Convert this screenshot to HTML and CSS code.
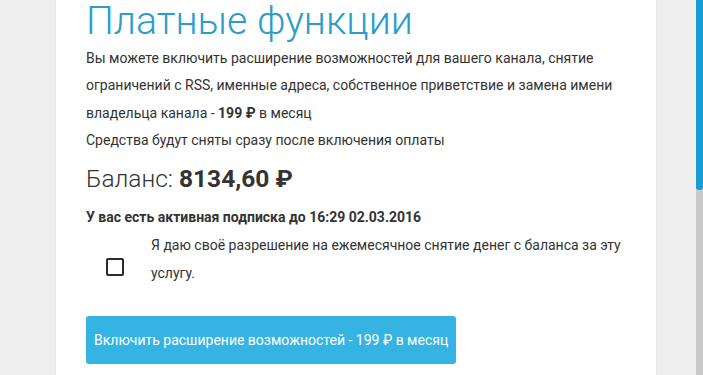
FILE: index.html
```html
<!DOCTYPE html>
<html lang="ru">
<head>
<meta charset="utf-8">
<title>Платные функции</title>
<link rel="stylesheet" href="styles.css">
</head>
<body>
<div class="page">
  <main class="card">
    <h1 class="title">Платные функции</h1>
    <p class="text first">Вы можете включить расширение возможностей для вашего канала, снятие ограничений с RSS, именные адреса, собственное приветствие и замена имени владельца канала - <b>199 ₽</b> в месяц</p>
    <p class="text">Средства будут сняты сразу после включения оплаты</p>
    <h2 class="balance">Баланс: <b>8134,60 ₽</b></h2>
    <p class="sub">У вас есть активная подписка до 16:29 02.03.2016</p>
    <label class="agree">
      <span class="check-col"><span class="checkbox"></span></span>
      <span class="agree-text">Я даю своё разрешение на ежемесячное снятие денег с баланса за эту услугу.</span>
    </label>
    <button class="btn" type="button">Включить расширение возможностей - 199 ₽ в месяц</button>
  </main>
</div>
<div class="scrollbar"><div class="thumb"></div></div>
</body>
</html>
```

FILE: styles.css
```css
html, body {
  margin: 0;
  padding: 0;
  height: 375px;
  overflow: hidden;
}
body {
  background: #eeeeee;
  font-family: Roboto, "Liberation Sans", sans-serif;
  color: #333333;
}
.page {
  padding-left: 56px;
  width: 600px;
}
.card {
  width: 600px;
  box-sizing: border-box;
  background: #ffffff;
  padding: 0 30px 20px 30px;
  min-height: 400px;
  box-shadow: 0 0 1px rgba(0,0,0,0.12);
}
.title {
  margin: 0;
  font-size: 39.3px;
  line-height: 42px;
  font-weight: 300;
  color: #2a9dcb;
}
.text {
  margin: 0;
  font-size: 14px;
  line-height: 27.5px;
}
.text.first {
  margin-top: 2.5px;
}
.text b { font-weight: 700; }
.balance {
  margin: 10px 0 0 0;
  font-size: 24.5px;
  line-height: 28px;
  font-weight: 300;
}
.balance b { font-weight: 700; }
.sub {
  margin: 11.6px 0 0 0;
  font-size: 14px;
  line-height: 27.5px;
  font-weight: 700;
}
.agree {
  display: flex;
  align-items: flex-start;
  margin-top: 0.8px;
  font-size: 14px;
  line-height: 27.5px;
}
.check-col {
  flex: 0 0 65px;
  padding-top: 25.5px;
}
.checkbox {
  display: block;
  width: 14px;
  height: 14px;
  margin-left: 20px;
  border: 2px solid #2b2b2b;
  border-radius: 2px;
}
.agree-text {
  flex: 1;
}
.btn {
  display: block;
  margin-top: 28.5px;
  height: 48px;
  padding: 0 8px;
  border: none;
  border-radius: 3px;
  background: #35b4e4;
  color: #ffffff;
  font-family: Roboto, "Liberation Sans", sans-serif;
  font-size: 14px;
}
.scrollbar {
  position: fixed;
  top: 0;
  right: 0;
  width: 7px;
  height: 375px;
  background: #c9c9c9;
}
.thumb {
  height: 190px;
  background: #1a9bd2;
  border-radius: 0 0 3px 3px;
}
```
